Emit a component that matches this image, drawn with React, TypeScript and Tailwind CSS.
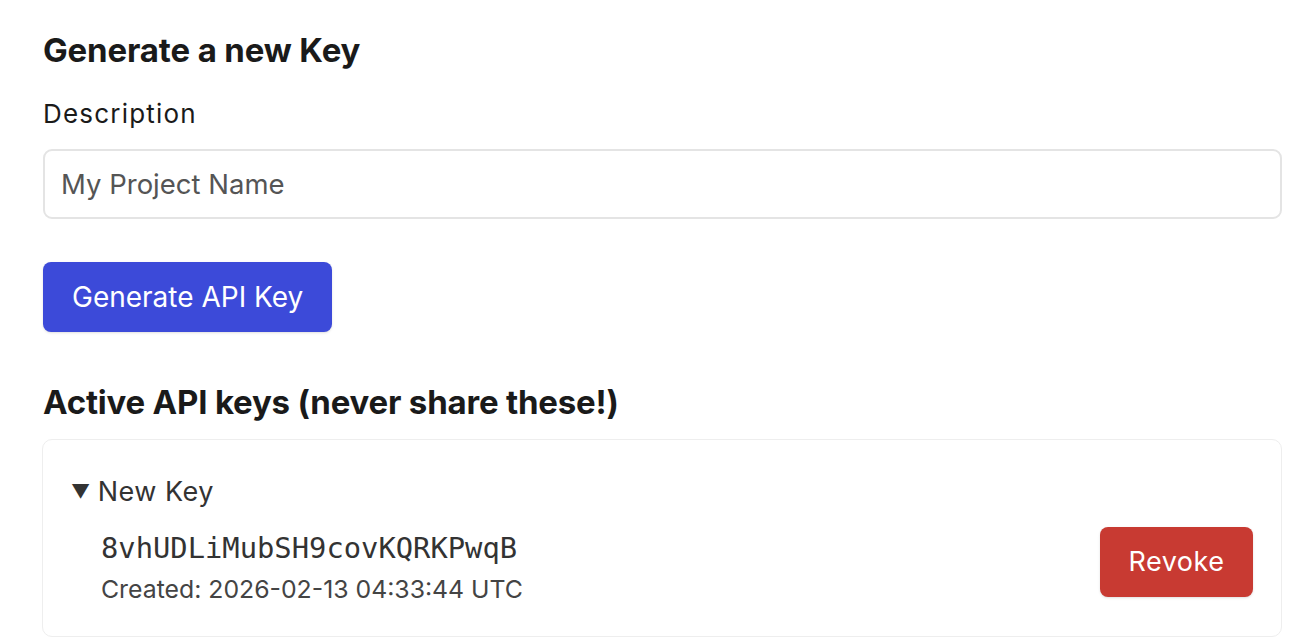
import React from "react";

export default function App() {
  return (
    <div className="min-h-[640px] bg-white px-[43px] pt-[30px] text-[#1a1a1a]" style={{ fontFamily: "Inter, 'Noto Sans', sans-serif" }}>
      <h2 className="text-[33px] font-bold leading-[40px] tracking-[-0.15px]">Generate a new Key</h2>
      <label className="mt-[28px] block text-[26px] leading-[32px] tracking-[1.2px] text-[#1a1a1a]">Description</label>
      <input
        className="mt-[19px] block h-[70px] w-[1239px] rounded-[9px] border-2 border-[#e4e4e4] bg-white px-[16px] text-[27.5px] text-[#333] outline-none placeholder:text-[#555]"
        placeholder="My Project Name"
      />
      <button className="mt-[43px] flex h-[70px] items-center rounded-[8px] bg-[#3c4ad9] px-[29px] text-[28px] text-white shadow-sm">
        Generate API Key
      </button>
      <h2 className="mt-[50px] text-[33px] font-bold leading-[40px] tracking-[-0.2px]">Active API keys (never share these!)</h2>
      <div className="mt-[17px] ml-[-1px] w-[1240px] rounded-[10px] border border-[#eeeeee] pl-[28px] pr-[28px] pt-[36px] pb-[33px]">
        <div className="flex items-center text-[27px] leading-[32px] tracking-[0.5px] text-[#333]">
          <span className="mr-[7px] text-[19px]">▼</span>New Key
        </div>
        <div className="mt-[19px] flex items-start justify-between pl-[30px]">
          <div className="pt-[3px]">
            <div className="text-[28.8px] leading-[36px] text-[#333]" style={{ fontFamily: "'DejaVu Sans Mono', monospace" }}>
              8vhUDLiMubSH9covKQRKPwqB
            </div>
            <div className="mt-[9px] text-[24.8px] leading-[28px] text-[#444]">Created: 2026-02-13 04:33:44 UTC</div>
          </div>
          <button className="flex h-[70px] w-[153px] items-center justify-center rounded-[8px] bg-[#c83a32] text-[27px] tracking-[0.5px] text-white shadow-sm">
            Revoke
          </button>
        </div>
      </div>
    </div>
  );
}
